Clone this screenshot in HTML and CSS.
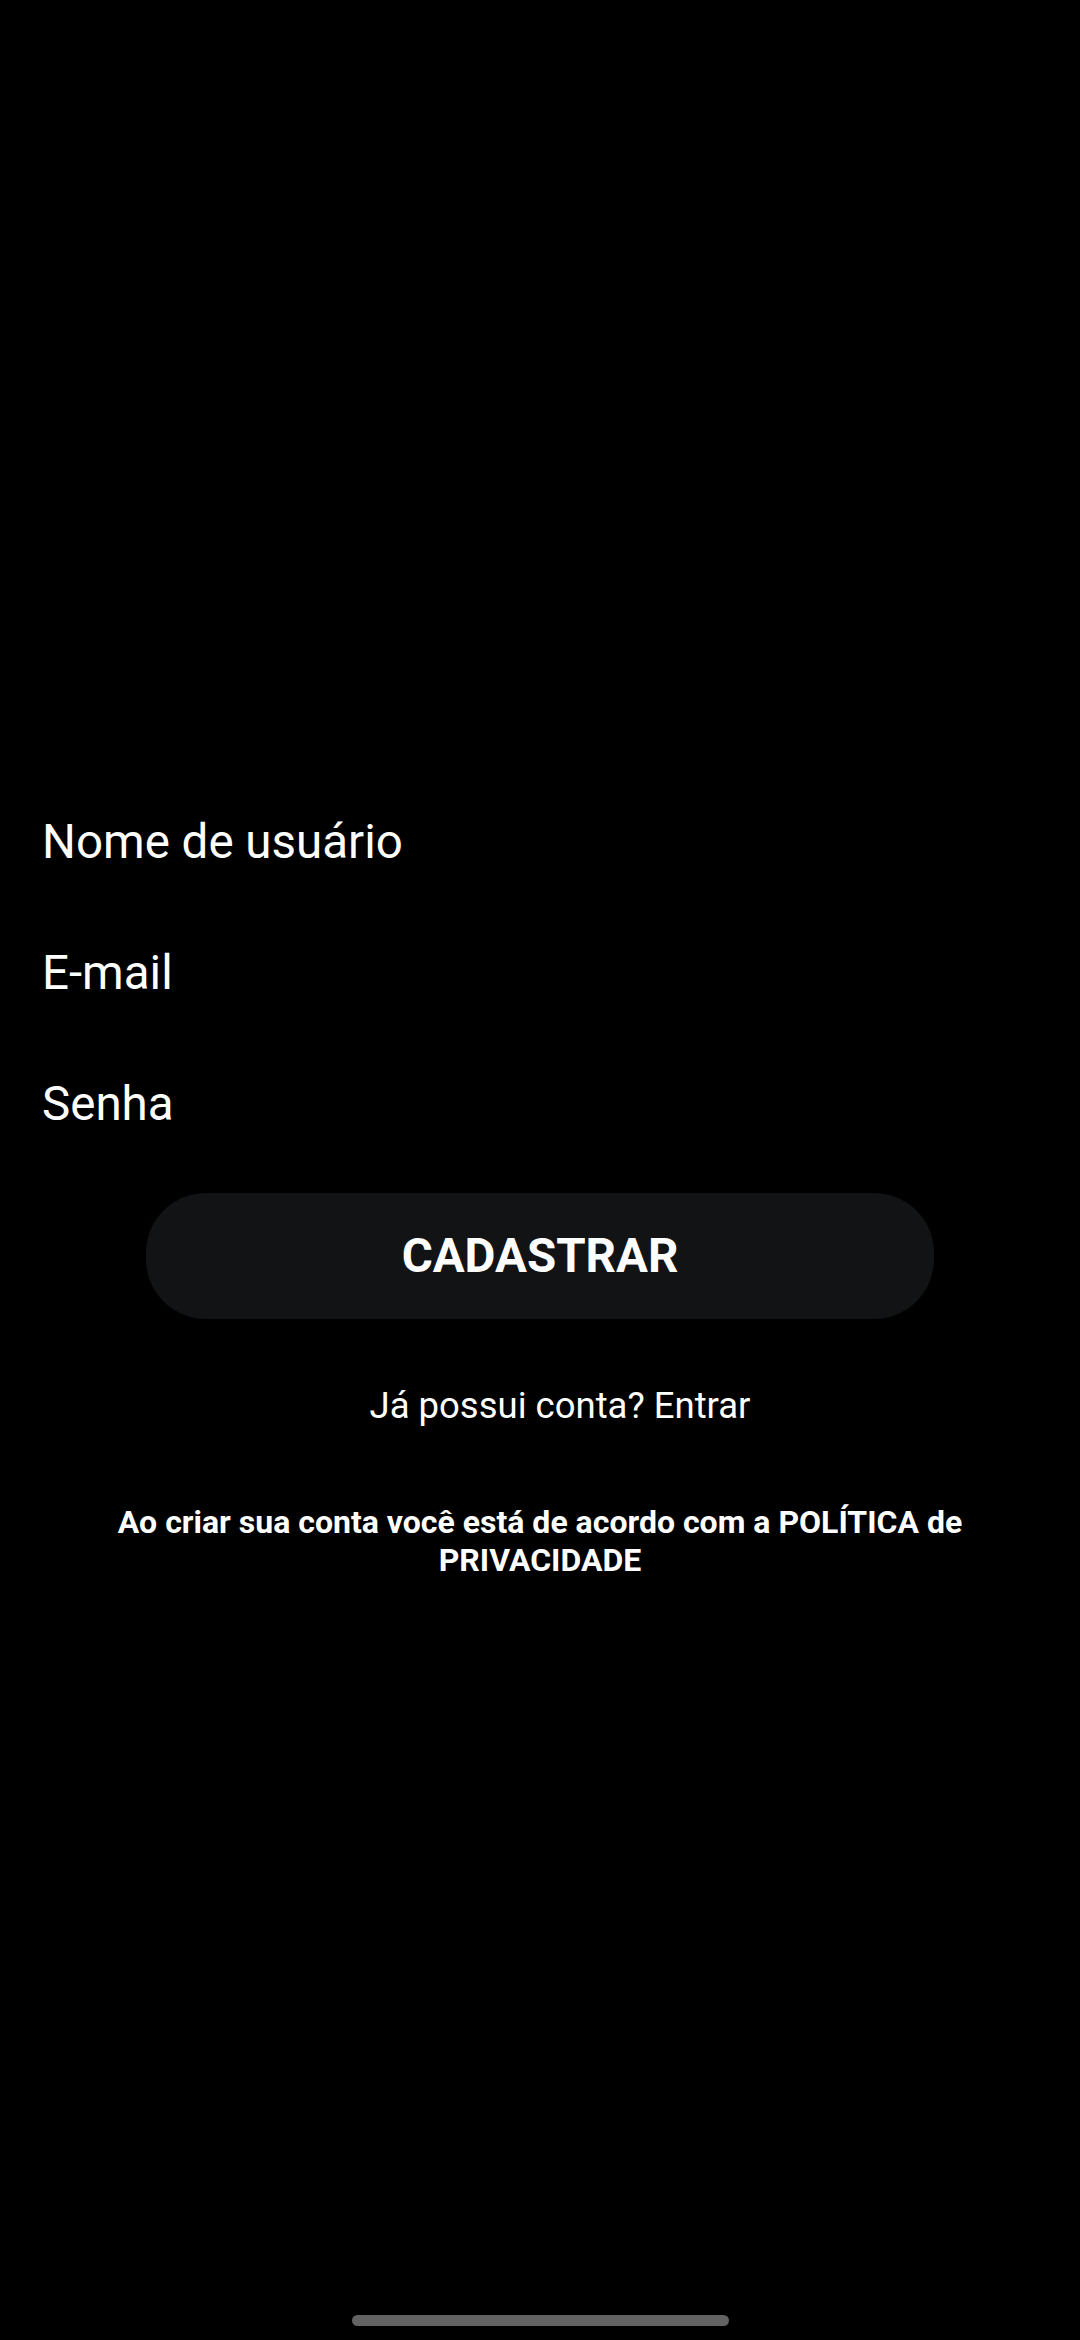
FILE: index.html
```html
<!DOCTYPE html>
<html lang="pt-BR">
<head>
    <meta charset="UTF-8">
    <meta name="viewport" content="width=device-width, initial-scale=1.0">
    <title>Cadastro</title>
    <link rel="stylesheet" href="styles.css">
</head>
<body>

    <div class="signup">
        <div class="field">Nome de usuário</div>
        <div class="field">E-mail</div>
        <div class="field">Senha</div>

        <button class="btn-signup">CADASTRAR</button>

        <p class="login-link">Já possui conta? Entrar</p>

        <p class="policy">Ao criar sua conta você está de acordo com a POLÍTICA de PRIVACIDADE</p>
    </div>

    <div class="home-bar"></div>

</body>
</html>
```

FILE: styles.css
```css
body {
    font-family: Roboto, "Liberation Sans", sans-serif;
    margin: 0;
    padding: 0;
    background-color: #000;
    color: #fff;
    width: 1080px;
    height: 2340px;
    display: flex;
    flex-direction: column;
}

.signup {
    padding-top: 777px;
    display: flex;
    flex-direction: column;
    flex: 1;
}

.field {
    height: 131px;
    line-height: 131px;
    padding: 0 42px;
    font-size: 47.5px;
}

.btn-signup {
    margin: 23px auto 0;
    width: 788px;
    height: 126px;
    border: none;
    border-radius: 60px;
    background-color: #121314;
    color: #fff;
    font-family: Roboto, "Liberation Sans", sans-serif;
    font-size: 47.5px;
    font-weight: bold;
}

.login-link {
    margin: 62px 0 0;
    padding-left: 40px;
    text-align: center;
    font-size: 36.5px;
    line-height: 50px;
}

.policy {
    margin: 72px 0 0;
    padding: 0 100px;
    text-align: center;
    font-size: 32px;
    font-weight: bold;
    line-height: 38px;
}

.home-bar {
    width: 377px;
    height: 11px;
    margin: 0 auto 14px;
    border-radius: 6px;
    background-color: #626262;
}
```
